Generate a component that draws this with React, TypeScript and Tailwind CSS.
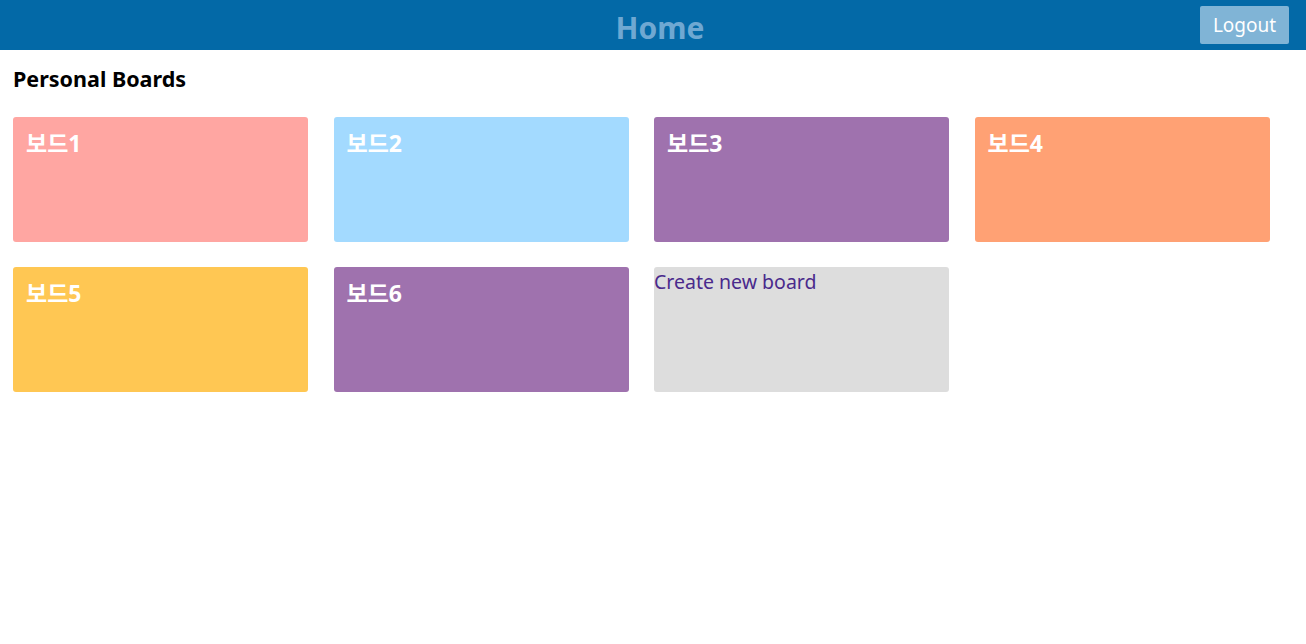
import React from "react";

const boards = [
  { id: 1, title: "보드1", color: "bg-[#ffa6a2]" },
  { id: 2, title: "보드2", color: "bg-[#a3daff]" },
  { id: 3, title: "보드3", color: "bg-[#9f72ae]" },
  { id: 4, title: "보드4", color: "bg-[#ffa174]" },
  { id: 5, title: "보드5", color: "bg-[#ffc753]" },
  { id: 6, title: "보드6", color: "bg-[#9f72ae]" },
];

const font = { fontFamily: '"Noto Sans", "Noto Sans CJK KR", sans-serif' };

export default function App() {
  return (
    <div className="min-h-screen bg-white" style={font}>
      <header className="relative flex h-[50px] items-center justify-center bg-[#0369a7]">
        <h1 className="ml-[14px] pt-[6px] text-[30px] font-bold leading-none text-[#6fa8d2]">Home</h1>
        <button className="absolute right-[17px] top-[6px] h-[38px] w-[89px] rounded-[2px] bg-[#80b4d6] text-[19px] text-white">
          Logout
        </button>
      </header>
      <main className="px-[13px]">
        <h2 className="mt-[14px] text-[21.5px] font-bold leading-[30px] text-black">Personal Boards</h2>
        <div className="mt-[23px] flex flex-wrap gap-x-[25.5px] gap-y-[25px]">
          {boards.map((b) => (
            <div key={b.id} className={`h-[125px] w-[295px] rounded-[3px] px-[13px] py-[11px] ${b.color}`}>
              <span className="text-[23px] font-bold leading-[30px] text-white">{b.title}</span>
            </div>
          ))}
          <div className="h-[125px] w-[295px] rounded-[3px] bg-[#dddddd] pt-[3px]">
            <span className="text-[19.5px] leading-[24px] text-[#4a2a8c]">Create new board</span>
          </div>
        </div>
      </main>
    </div>
  );
}
